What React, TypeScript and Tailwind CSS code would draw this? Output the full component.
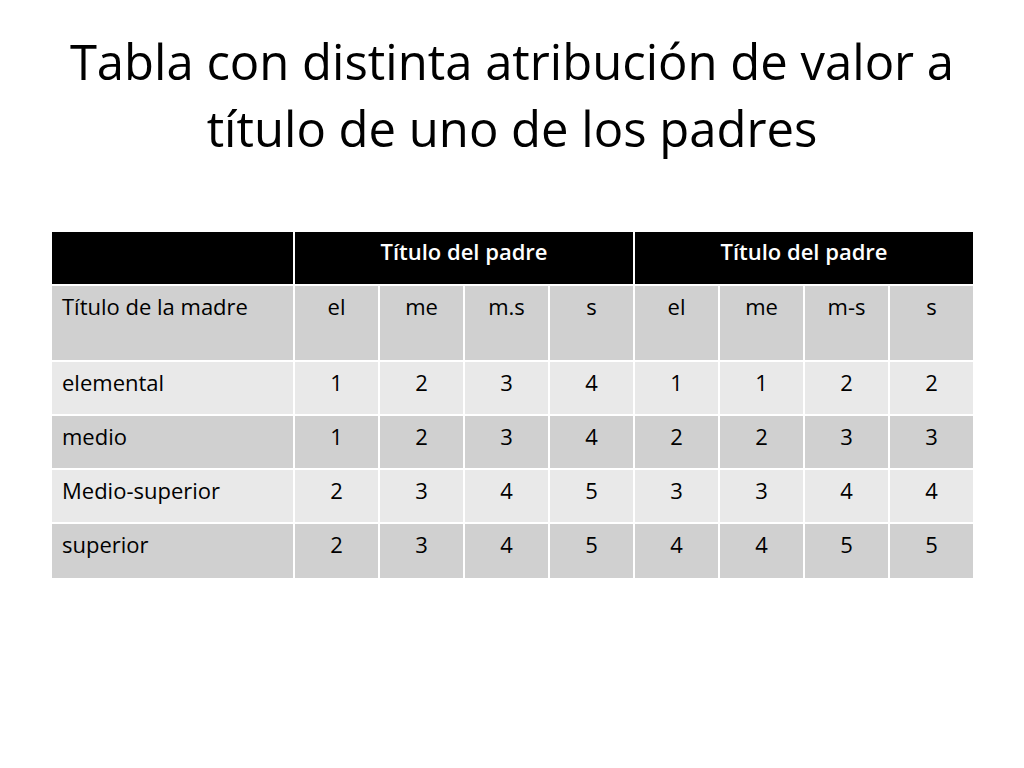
import React from 'react';

const HEAD = ['el', 'me', 'm.s', 's', 'el', 'me', 'm-s', 's'];

const ROWS: { label: string; values: number[]; light: boolean }[] = [
  { label: 'elemental', values: [1, 2, 3, 4, 1, 1, 2, 2], light: true },
  { label: 'medio', values: [1, 2, 3, 4, 2, 2, 3, 3], light: false },
  { label: 'Medio-superior', values: [2, 3, 4, 5, 3, 3, 4, 4], light: true },
  { label: 'superior', values: [2, 3, 4, 5, 4, 4, 5, 5], light: false },
];

export default function App() {
  return (
    <div
      className="w-[1024px] h-[768px] bg-white text-black overflow-hidden"
      style={{ fontFamily: '"Open Sans", "Liberation Sans", sans-serif' }}
    >
      {/* Título */}
      <h1 className="pt-[28px] text-center text-[49px] leading-[67px] font-normal">
        Tabla con distinta atribución de valor a
        <br />
        título de uno de los padres
      </h1>

      {/* Tabla */}
      <div className="mt-[70px] ml-[52px] w-[921px] grid grid-cols-[241px_repeat(8,83px)] gap-[2px] text-[22px] leading-[30px]">
        <div className="h-[52px] bg-black" />
        <div className="col-span-4 h-[52px] bg-black text-white font-semibold text-center pt-[4px]">
          Título del padre
        </div>
        <div className="col-span-4 h-[52px] bg-black text-white font-semibold text-center pt-[4px]">
          Título del padre
        </div>

        <div className="h-[74px] bg-[#d0d0d0] pl-[10px] pt-[5px]">Título de la madre</div>
        {HEAD.map((h, i) => (
          <div key={i} className="h-[74px] bg-[#d0d0d0] text-center pt-[5px]">
            {h}
          </div>
        ))}

        {ROWS.map((r, ri) => (
          <React.Fragment key={r.label}>
            <div
              className={`${ri === ROWS.length - 1 ? 'h-[54px]' : 'h-[52px]'} ${
                r.light ? 'bg-[#e9e9e9]' : 'bg-[#d0d0d0]'
              } pl-[10px] pt-[5px]`}
            >
              {r.label}
            </div>
            {r.values.map((v, i) => (
              <div
                key={i}
                className={`${ri === ROWS.length - 1 ? 'h-[54px]' : 'h-[52px]'} ${
                  r.light ? 'bg-[#e9e9e9]' : 'bg-[#d0d0d0]'
                } text-center pt-[5px]`}
              >
                {v}
              </div>
            ))}
          </React.Fragment>
        ))}
      </div>
    </div>
  );
}
